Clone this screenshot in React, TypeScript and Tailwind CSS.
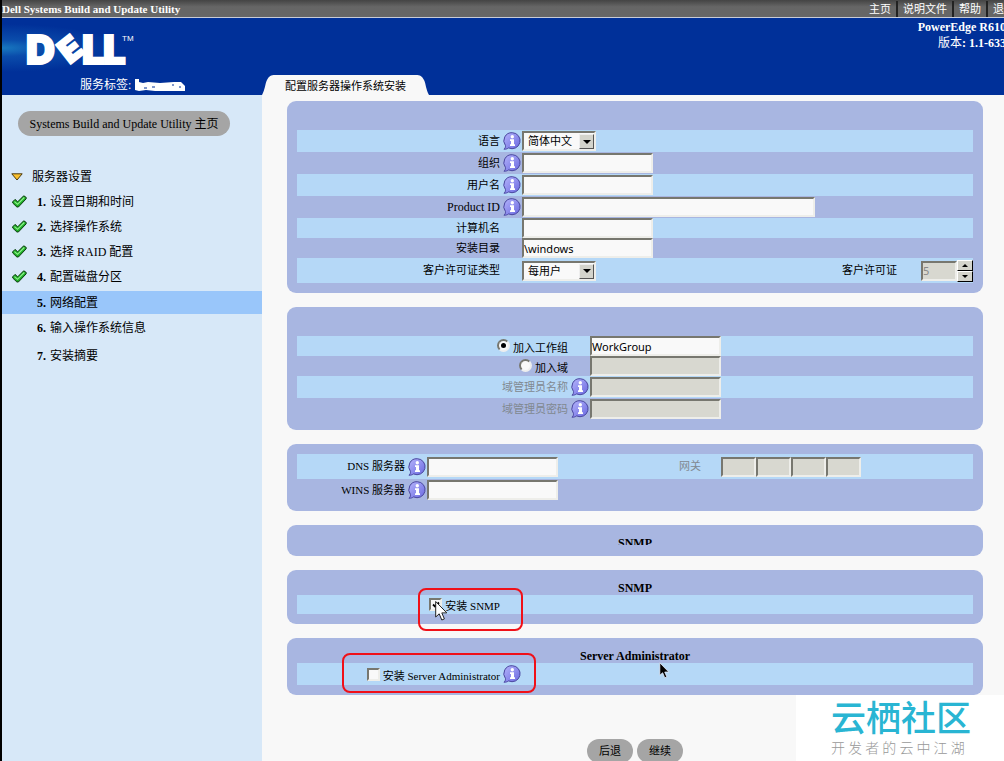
import { useState } from 'react';
import type { ReactNode } from 'react';

const SUNKEN =
  'border-2 border-t-[#77776f] border-l-[#77776f] border-r-[#eeeeea] border-b-[#eeeeea] rounded-none outline-none';

function InfoIcon() {
  return (
    <svg viewBox="0 0 18 18" className="h-[18px] w-[18px] shrink-0" aria-hidden="true">
      <defs>
        <linearGradient id="infoFill" x1="0" y1="0" x2="1" y2="1">
          <stop offset="0" stopColor="#b4b4fb" />
          <stop offset="1" stopColor="#6a68e0" />
        </linearGradient>
      </defs>
      <path
        d="M9.300 .7a8 8 0 1 1-3.700 15.200C4.300 16.900 2.800 17.200 .9 17.200c1.200-.9 1.700-1.900 1.600-3.600A8 8 0 0 1 9.300 .7z"
        fill="url(#infoFill)"
        stroke="#4a479f"
        strokeWidth="1"
      />
      <circle cx="9.300" cy="4.700" r="1.700" fill="#fff" />
      <path d="M7 7.300h4v4.900h1v1.700H7v-1.700h1V9H7z" fill="#fff" />
    </svg>
  );
}

function CheckIcon() {
  return (
    <svg viewBox="0 0 15 13" className="h-[13px] w-[15px]" aria-hidden="true">
      <path
        d="M.7 6.800 3 4.400l2.700 2.400L11.700 .8l2.500 1.600v1.400L6.400 12H4.900L.7 8z"
        fill="#1fae27"
        stroke="#0b3d0e"
        strokeWidth="1"
        strokeLinejoin="round"
      />
      <path d="M2.400 6.600 5.500 9.300 12.300 2.500" fill="none" stroke="#8df08a" strokeWidth="1.200" />
    </svg>
  );
}

function DellLogo() {
  return (
    <svg viewBox="0 0 112 40" className="h-[40px] w-[112px] overflow-visible" role="img" aria-label="DELL">
      <g
        fill="#fff"
        stroke="#fff"
        strokeWidth="2"
        fontFamily="Inter, 'Open Sans', sans-serif"
        fontWeight="900"
        fontSize="40"
      >
        <text x="0" y="35">D</text>
        <text x="0" y="12" textAnchor="middle" transform="translate(44 20) rotate(-38)" fontSize="33">E</text>
        <text x="56" y="35">L</text>
        <text x="77" y="35">L</text>
      </g>
      <text x="96" y="12" fill="#fff" fontFamily="'Liberation Sans', sans-serif" fontSize="8">TM</text>
    </svg>
  );
}

function Pointer({ dark = false }: { dark?: boolean }) {
  return (
    <svg viewBox="0 0 13 21" className={dark ? 'h-[17px] w-[11px]' : 'h-[22px] w-[13px]'} aria-hidden="true">
      <path
        d="M.7 1v15.500l3.500-3.200 2.600 6.200 2.600-1.100-2.600-6h5z"
        fill={dark ? '#000' : '#fff'}
        stroke={dark ? '#e8eefc' : '#222'}
        strokeWidth="1"
      />
    </svg>
  );
}

function Panel({ title, children, className = 'pt-[29px]' }: { title?: string; children?: ReactNode; className?: string }) {
  return (
    <section className={`rounded-[9px] bg-[#a8b6e1] px-[10px] pb-[10px] ${className}`}>
      {title && <h2 className="flex h-[25px] items-end justify-center pb-[1px] text-[12px] leading-[12px] font-bold">{title}</h2>}
      {children}
    </section>
  );
}

function Row({ light = false, className = 'h-[22px]', children }: { light?: boolean; className?: string; children: ReactNode }) {
  return <div className={`relative flex items-center ${light ? 'bg-[#b5d8f7]' : ''} ${className}`}>{children}</div>;
}

function LabelCell({ width = 'w-[225px]', info = false, children }: { width?: string; info?: boolean; children: ReactNode }) {
  return (
    <div className={`flex shrink-0 items-center justify-end ${width}`}>
      {children}
      <span className="ml-[3px] flex w-[19px] shrink-0">{info && <InfoIcon />}</span>
    </div>
  );
}

function TextBox({ id, width = 'w-[131px]', value = '', disabled = false }: { id: string; width?: string; value?: string; disabled?: boolean }) {
  return (
    <input
      id={id}
      type="text"
      defaultValue={value}
      disabled={disabled}
      className={`h-[20px] font-['Noto_Sans'] text-[11px] leading-[16px] ${SUNKEN} ${width} ${disabled ? 'bg-[#d8d8d0] text-[#888]' : 'bg-[#f9f9f9]'}`}
    />
  );
}

function SelectBox({ id, options }: { id: string; options: string[] }) {
  return (
    <div className="relative w-[74px]">
      <select id={id} className={`h-[20px] w-full appearance-none bg-[#f9f9f9] pl-[4px] text-[11px] leading-[16px] ${SUNKEN}`}>
        {options.map((o) => (
          <option key={o}>{o}</option>
        ))}
      </select>
      <span className="pointer-events-none absolute top-[3px] right-[2px] flex h-[15px] w-[15px] items-center justify-center border border-t-[#eee] border-r-[#555] border-b-[#555] border-l-[#eee] bg-[#d4d4cc]">
        <svg viewBox="0 0 8 4" className="h-[4px] w-[8px]" aria-hidden="true">
          <path d="M0 0h8L4 4z" />
        </svg>
      </span>
    </div>
  );
}

function Radio({ id, checked, onChange }: { id: string; checked: boolean; onChange: () => void }) {
  return (
    <span className="relative mr-[3px] mb-[2px] flex">
      <input
        id={id}
        type="radio"
        name="join"
        checked={checked}
        onChange={onChange}
        className="h-[13px] w-[13px] appearance-none rounded-full border-2 border-t-[#77776f] border-r-[#eee] border-b-[#eee] border-l-[#77776f] bg-[#f9f9f9]"
      />
      {checked && <span className="pointer-events-none absolute top-[4px] left-[4px] h-[5px] w-[5px] rounded-full bg-black" />}
    </span>
  );
}

function CheckBox({ id, initial = false }: { id: string; initial?: boolean }) {
  const [on, setOn] = useState(initial);
  return (
    <span className="relative mr-[3px] flex">
      <input id={id} type="checkbox" checked={on} onChange={() => setOn(!on)} className={`h-[13px] w-[13px] appearance-none bg-[#f9f9f9] ${SUNKEN}`} />
      {on && (
        <svg viewBox="0 0 8 8" className="pointer-events-none absolute top-[3px] left-[3px] h-[8px] w-[8px]" aria-hidden="true">
          <path d="M1 3.500 3 5.500 7 1.500" fill="none" stroke="#000" strokeWidth="1.800" />
        </svg>
      )}
    </span>
  );
}

const steps = [
  { name: '设置日期和时间', done: true },
  { name: '选择操作系统', done: true },
  { name: '选择 RAID 配置', done: true },
  { name: '配置磁盘分区', done: true },
  { name: '网络配置', active: true },
  { name: '输入操作系统信息' },
  { name: '安装摘要' },
];

export default function App() {
  const [join, setJoin] = useState('group');

  return (
    <div className="relative flex h-screen flex-col overflow-hidden border-l-2 border-black bg-[#f8f8f8] font-['Liberation_Serif','Noto_Sans_CJK_SC',serif] text-[11px] text-black">
      <div className="flex h-[18px] shrink-0 items-center justify-between border-b border-[#c8ccd8] bg-linear-to-b from-[#444] to-[#666] to-40% text-white">
        <h1 className="text-[11px] leading-[16px] font-bold whitespace-nowrap">Dell Systems Build and Update Utility</h1>
        <nav className="-mr-[16px] flex shrink-0 leading-[16px] whitespace-nowrap">
          {['主页', '说明文件', '帮助', '退出'].map((t, i) => (
            <a key={t} href="#" className={`px-[5px] ${i ? 'border-l-2 border-[#222]' : ''}`}>
              {t}
            </a>
          ))}
        </nav>
      </div>

      <header className="flex h-[77px] shrink-0 justify-between bg-[#003099] text-white">
        <div className="flex">
          <div className="w-[260px] bg-[radial-gradient(ellipse_120px_24px_at_0px_30px,#1878c0,#0a4cab_35%,transparent)] pt-[11px] pl-[24px]">
            <DellLogo />
            <div className="mt-[8px] ml-[54px] flex items-center text-[12px] leading-[16px]">
              服务标签:
              <svg viewBox="0 0 50 13" className="ml-[4px] h-[13px] w-[50px]" aria-hidden="true">
                <path d="M0 0h4v3l4 1 5-1 12 1 14-1 7 0 4 4v5l-9 0-10 0-11 0-9-1-7 1-4-1z" fill="#fff" />
                <path d="M9 9h3M17 8h3M37 6h2M44 8h2" stroke="#003099" strokeWidth="1" />
              </svg>
            </div>
          </div>
          <div className="flex items-end text-black">
            <svg viewBox="0 0 20 20" className="h-[20px] w-[20px]" aria-hidden="true">
              <path d="M0 20C3 15 3 9 5 5 7 1 9 0 13 0h7v20z" fill="#f8f8f8" />
            </svg>
            <span className="h-[20px] bg-[#f8f8f8] px-[3px] leading-[22px] whitespace-nowrap">配置服务器操作系统安装</span>
            <svg viewBox="0 0 20 20" className="h-[20px] w-[20px]" aria-hidden="true">
              <path d="M20 20C17 15 17 9 15 5 13 1 11 0 7 0H0v20z" fill="#f8f8f8" />
            </svg>
          </div>
        </div>
        <div className="-mr-[2px] shrink-0 pt-[1px] text-right text-[12px] leading-[16px] font-bold whitespace-nowrap">
          <p>PowerEdge R610</p>
          <p><span className="font-normal">版本</span>: 1.1-633</p>
        </div>
      </header>

      <div className="flex min-h-0 flex-1">
        <aside className="w-[260px] shrink-0 bg-[#d7e8f8] pt-[16px] text-[12px]">
          <button type="button" className="ml-[16px] h-[25px] w-[212px] rounded-full bg-[#a5a5a5] whitespace-nowrap">
            Systems Build and Update Utility 主页
          </button>
          <h2 className="mt-[28px] flex h-[25px] items-center pl-[9px]">
            <svg viewBox="0 0 12 8" className="mr-[9px] h-[8px] w-[12px]" aria-hidden="true">
              <path d="M.8 .8h10.400L6 7z" fill="#fbc02d" stroke="#4a3a10" strokeWidth="1" />
            </svg>
            服务器设置
          </h2>
          <ol>
            {steps.map((s, i) => (
              <li
                key={s.name}
                className={`flex items-center pl-[10px] ${s.active ? 'mt-[2px] h-[23px] bg-[#99c6fa]' : s.done ? 'h-[25px]' : 'h-[28px]'}`}
              >
                <span className="w-[25px]">{s.done && <CheckIcon />}</span>
                <b className="w-[13px]">{i + 1}.</b>
                <a href="#">{s.name}</a>
              </li>
            ))}
          </ol>
        </aside>

        <main className="flex min-w-0 flex-1 flex-col gap-[14px] pt-[6px] pr-[21px] pl-[25px] [&>*]:shrink-0">
          <Panel>
            <Row light>
              <LabelCell info><label htmlFor="lang">语言</label></LabelCell>
              <SelectBox id="lang" options={['简体中文', 'English']} />
            </Row>
            <Row>
              <LabelCell info><label htmlFor="org">组织</label></LabelCell>
              <TextBox id="org" />
            </Row>
            <Row light>
              <LabelCell info><label htmlFor="user">用户名</label></LabelCell>
              <TextBox id="user" />
            </Row>
            <Row>
              <LabelCell info><label htmlFor="pid" className="text-[12px]">Product ID</label></LabelCell>
              <TextBox id="pid" width="w-[293px]" />
            </Row>
            <Row light className="h-[20px]">
              <LabelCell><label htmlFor="host">计算机名</label></LabelCell>
              <TextBox id="host" />
            </Row>
            <Row className="h-[20px]">
              <LabelCell><label htmlFor="dir">安装目录</label></LabelCell>
              <TextBox id="dir" value="\windows" />
            </Row>
            <Row light className="h-[25px]">
              <LabelCell><label htmlFor="lictype">客户许可证类型</label></LabelCell>
              <SelectBox id="lictype" options={['每用户', '每服务器']} />
              <label htmlFor="lic" className="mr-[24px] ml-auto">客户许可证</label>
              <TextBox id="lic" width="w-[36px]" value="5" disabled />
              <span className="flex flex-col">
                {['M0 3h6L3 0z', 'M0 0h6L3 3z'].map((d, i) => (
                  <button
                    key={d}
                    type="button"
                    aria-label={i ? '减少' : '增加'}
                    className="flex h-[11px] w-[16px] items-center justify-center border border-t-white border-r-black border-b-black border-l-white bg-[#d4d4cc]"
                  >
                    <svg viewBox="0 0 6 3" className="h-[3px] w-[6px]" aria-hidden="true"><path d={d} /></svg>
                  </button>
                ))}
              </span>
            </Row>
          </Panel>

          <Panel>
            <Row light className="h-[20px]">
              <LabelCell width="w-[293px]">
                <Radio id="group" checked={join === 'group'} onChange={() => setJoin('group')} />
                <label htmlFor="group" className="pt-[4px]">加入工作组</label>
              </LabelCell>
              <TextBox id="groupname" value="WorkGroup" />
            </Row>
            <Row className="h-[20px]">
              <LabelCell width="w-[293px]">
                <Radio id="domain" checked={join === 'domain'} onChange={() => setJoin('domain')} />
                <label htmlFor="domain" className="pt-[4px]">加入域</label>
              </LabelCell>
              <TextBox id="domainname" disabled />
            </Row>
            <Row light>
              <LabelCell width="w-[293px]" info><label htmlFor="admin" className="text-[#808890]">域管理员名称</label></LabelCell>
              <TextBox id="admin" disabled />
            </Row>
            <Row>
              <LabelCell width="w-[293px]" info><label htmlFor="pass" className="text-[#808890]">域管理员密码</label></LabelCell>
              <TextBox id="pass" disabled />
            </Row>
          </Panel>

          <Panel className="pt-[10px]">
            <Row light className="h-[25px]">
              <LabelCell width="w-[130px]" info><label htmlFor="dns">DNS 服务器</label></LabelCell>
              <TextBox id="dns" />
              <label htmlFor="gw1" className="w-[163px] pr-[20px] text-right text-[#808890]">网关</label>
              {['gw1', 'gw2', 'gw3', 'gw4'].map((id) => (
                <TextBox key={id} id={id} width="w-[35px]" disabled />
              ))}
            </Row>
            <Row>
              <LabelCell width="w-[130px]" info><label htmlFor="wins">WINS 服务器</label></LabelCell>
              <TextBox id="wins" />
            </Row>
          </Panel>

          <Panel className="pt-[10px]">
            <h2 className="h-[10px] mb-[1px] overflow-hidden text-center text-[12px] leading-[17px] font-bold">SNMP</h2>
          </Panel>

          <Panel title="SNMP" className="">
            <Row light className="h-[19px]">
              <LabelCell>
                <CheckBox id="snmp" initial />
                <label htmlFor="snmp" className="pt-[4px]">安装 SNMP</label>
              </LabelCell>
              <div className="pointer-events-none absolute top-[-7px] left-[121px] h-[43px] w-[105px] rounded-[8px] border-2 border-[#f01018]" />
              <div className="pointer-events-none absolute top-[5px] left-[138px]"><Pointer /></div>
            </Row>
          </Panel>

          <Panel title="Server Administrator" className="">
            <Row light>
              <LabelCell info>
                <CheckBox id="sa" />
                <label htmlFor="sa" className="pt-[4px]">安装 Server Administrator</label>
              </LabelCell>
              <div className="pointer-events-none absolute top-[-10px] left-[45px] h-[40px] w-[194px] rounded-[8px] border-2 border-[#f01018]" />
              <div className="pointer-events-none absolute top-[-1px] left-[362px]"><Pointer dark /></div>
            </Row>
          </Panel>

          <div className="mt-[30px] flex justify-center gap-[4px]">
            <button type="button" className="h-[24px] w-[46px] rounded-full bg-[#a5a5a5]">后退</button>
            <button type="button" className="h-[24px] w-[46px] rounded-full bg-[#a5a5a5]">继续</button>
          </div>
        </main>
      </div>

      <div className="absolute right-0 bottom-0 h-[66px] w-[208px] bg-white pl-[35px] font-['Noto_Sans_CJK_SC',sans-serif] whitespace-nowrap">
        <p className="text-[35px] leading-[42px] font-medium text-[#29b5d3]">云栖社区</p>
        <p className="text-[14px] leading-[20px] font-light text-[#999]">开 发 者 的 云 中 江 湖</p>
      </div>
    </div>
  );
}
